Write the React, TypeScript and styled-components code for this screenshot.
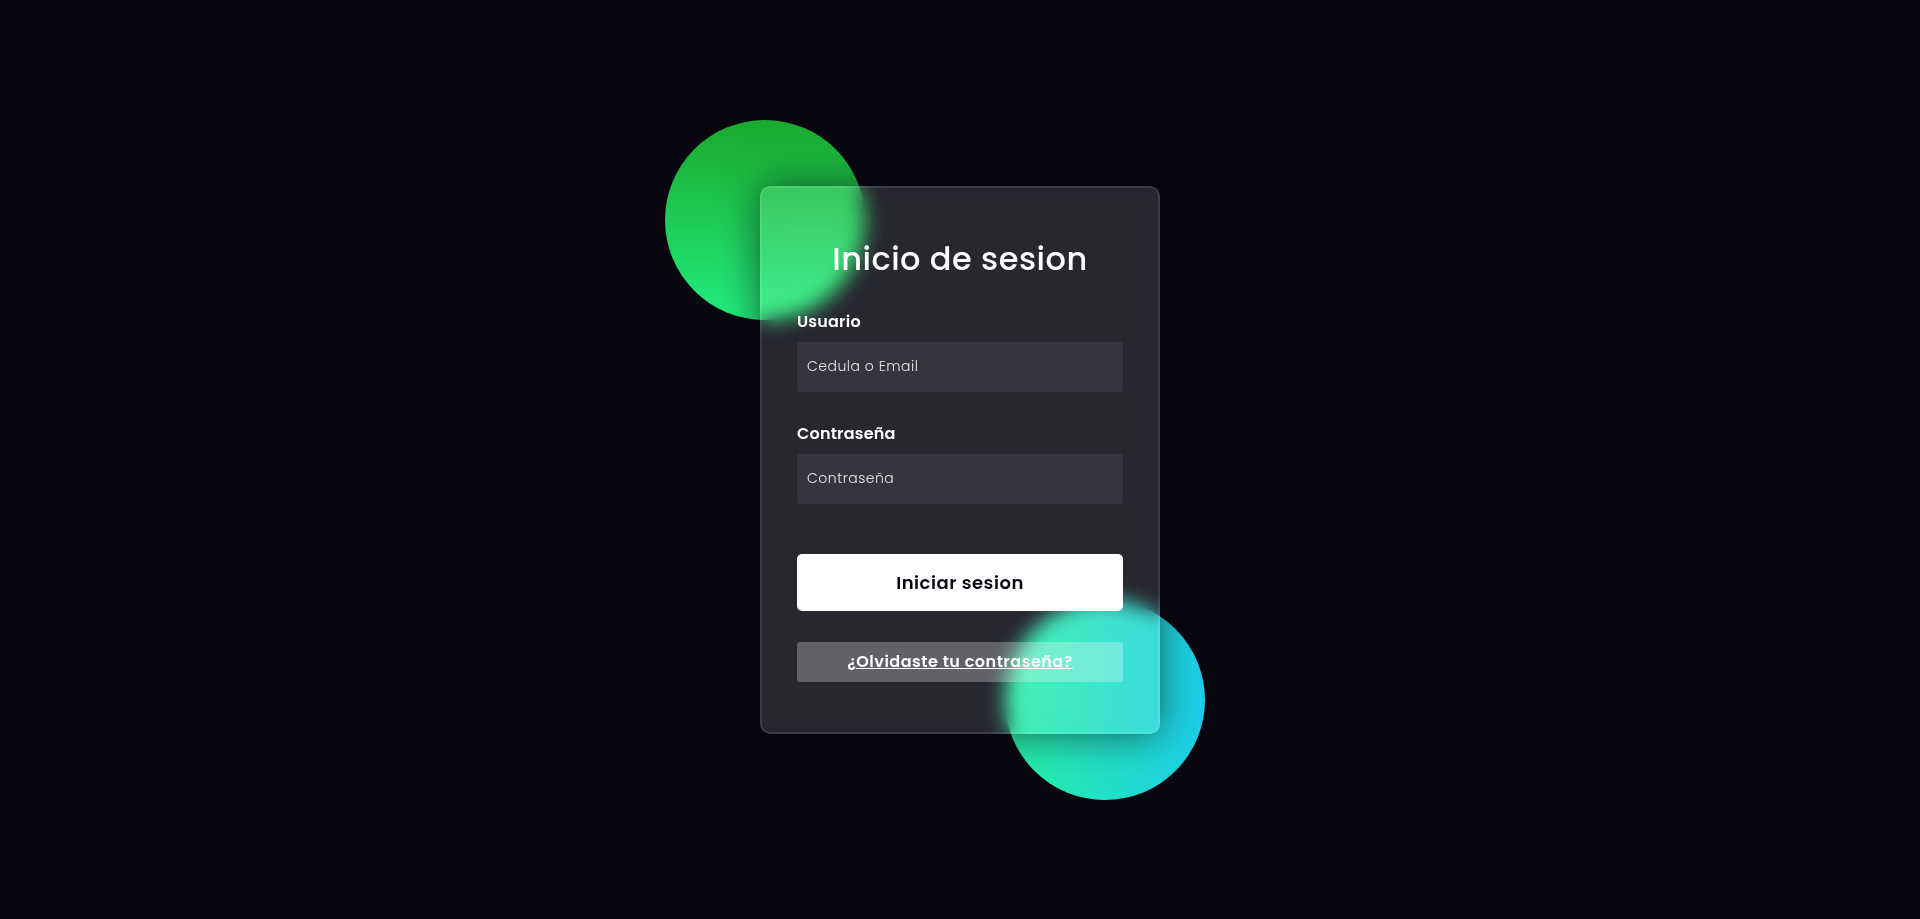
import React from "react";
import styled, { createGlobalStyle } from "styled-components";

const GlobalStyle = createGlobalStyle`
  *, *::before, *::after { box-sizing: border-box; margin: 0; padding: 0; }
  html, body { height: 100%; }
  body {
    background-color: #080710;
    font-family: "Poppins", "Inter", "Noto Sans", sans-serif;
  }
  #root { min-height: 100vh; }
`;

const Stage = styled.main`
  min-height: 100vh;
  display: grid;
  place-items: center;
`;

const Backdrop = styled.div`
  grid-area: 1 / 1;
  position: relative;
  width: 430px;
  height: 520px;
`;

const Shape = styled.div<{ $variant: "green" | "aqua" }>`
  position: absolute;
  width: 200px;
  height: 200px;
  border-radius: 50%;
  ${({ $variant }) =>
    $variant === "green"
      ? `background: linear-gradient(#1aa92c, #22ee7e); left: -80px; top: -80px;`
      : `background: linear-gradient(to right, #27f0a2, #1ccfea); right: -30px; bottom: -80px;`}
`;

const Form = styled.form`
  grid-area: 1 / 1;
  position: relative;
  width: 400px;
  background-color: rgba(255, 255, 255, 0.13);
  border-radius: 10px;
  backdrop-filter: blur(10px);
  -webkit-backdrop-filter: blur(10px);
  border: 2px solid rgba(255, 255, 255, 0.1);
  box-shadow: 0 0 40px rgba(8, 7, 16, 0.6);
  padding: 50px 35px;
  display: flex;
  flex-direction: column;

  * {
    font-family: "Poppins", "Inter", "Noto Sans", sans-serif;
    color: #ffffff;
    letter-spacing: 0.5px;
    outline: none;
    border: none;
  }
`;

const Title = styled.h3`
  font-size: 32px;
  font-weight: 500;
  line-height: 42px;
  text-align: center;
`;

const Label = styled.label`
  display: block;
  margin-top: 30px;
  font-size: 16px;
  font-weight: 600;
  line-height: 24px;
  letter-spacing: 0.2px !important;
`;

const Input = styled.input`
  display: block;
  height: 50px;
  width: 100%;
  background-color: rgba(255, 255, 255, 0.07);
  border-radius: 3px;
  padding: 0 10px;
  margin-top: 8px;
  font-size: 14px;
  font-weight: 300;
  &::placeholder { color: #e5e5e5; }
`;

const Submit = styled.button`
  margin-top: 50px;
  width: 100%;
  background-color: #ffffff;
  color: #080710 !important;
  padding: 15px 0;
  font-size: 18px;
  font-weight: 600;
  line-height: 27px;
  border-radius: 5px;
  cursor: pointer;
`;

const ForgotBox = styled.div`
  margin-top: 31px;
  height: 40px;
  border-radius: 3px;
  background-color: rgba(255, 255, 255, 0.27);
  display: flex;
  align-items: center;
  justify-content: center;
`;

const ForgotLink = styled.a`
  font-size: 16px;
  font-weight: 600;
  line-height: 24px;
  text-decoration: underline;
  cursor: pointer;
`;

export default function App() {
  return (
    <>
      <GlobalStyle />
      <Stage>
        <Backdrop>
          <Shape $variant="green" />
          <Shape $variant="aqua" />
        </Backdrop>
        <Form onSubmit={(e) => e.preventDefault()}>
          <Title>Inicio de sesion</Title>
          <Label htmlFor="username">Usuario</Label>
          <Input type="text" placeholder="Cedula o Email" id="username" />
          <Label htmlFor="password">Contraseña</Label>
          <Input type="password" placeholder="Contraseña" id="password" />
          <Submit type="submit">Iniciar sesion</Submit>
          <ForgotBox>
            <ForgotLink href="#">¿Olvidaste tu contraseña?</ForgotLink>
          </ForgotBox>
        </Form>
      </Stage>
    </>
  );
}
